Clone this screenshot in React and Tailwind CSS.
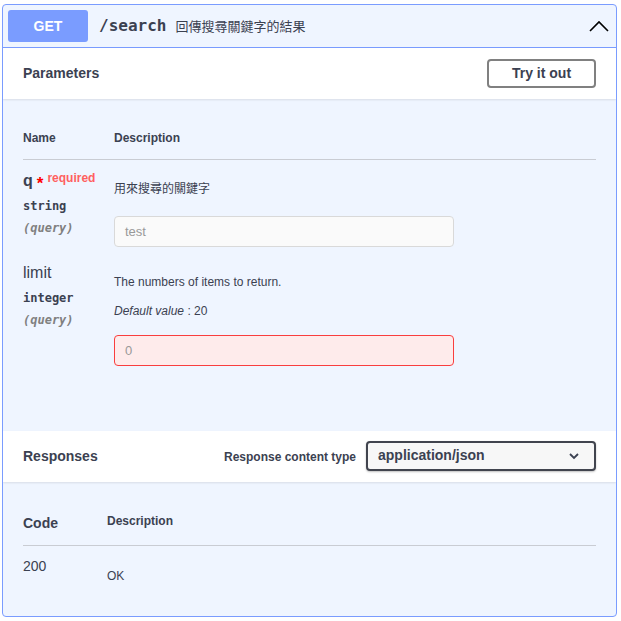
import React from 'react'

const sans = "font-['Liberation_Sans',Arial,sans-serif]"
const mono = "font-['DejaVu_Sans_Mono',monospace]"
const cjk = "font-['Noto_Sans_CJK_TC',sans-serif]"

function ChevronUp() {
  return (
    <svg width="22" height="14" viewBox="0 0 22 14" fill="none">
      <polyline points="2,12 11,3 20,12" stroke="#000" strokeWidth="1.6" />
    </svg>
  )
}

function ChevronDown() {
  return (
    <svg width="12" height="8" viewBox="0 0 12 8" fill="none">
      <polyline points="2,2 6,6 10,2" stroke="#3b4151" strokeWidth="1.8" />
    </svg>
  )
}

export default function App() {
  return (
    <div className={`w-[621px] h-[621px] bg-white pt-[4px] px-[2px] ${sans} text-[#3b4151]`}>
      <div className="w-[615px] h-[613px] border border-[#7a9cff] rounded-[4px] bg-[#eff5ff] overflow-hidden flex flex-col">
        {/* summary */}
        <div className="h-[43px] flex items-center border-b border-[#7a9cff] pl-[5px] pr-[4px]">
          <div className="w-[80px] h-[32px] rounded-[3px] bg-[#7a9cff] text-white text-[14px] font-bold flex items-center justify-center">
            GET
          </div>
          <span className={`ml-[11px] text-[16px] font-bold ${mono}`}>/search</span>
          <span className={`ml-[9px] text-[13px] ${cjk}`}>回傳搜尋關鍵字的結果</span>
          <div className="ml-auto mr-[2px]">
            <ChevronUp />
          </div>
        </div>

        {/* parameters header */}
        <div className="h-[51px] bg-white shadow-[0_1px_2px_rgba(0,0,0,0.1)] flex items-center pl-[20px] pr-[20px]">
          <h4 className="text-[14px] font-bold">Parameters</h4>
          <button className="ml-auto w-[109px] h-[29px] border-2 border-[#808080] rounded-[4px] text-[14px] font-bold">
            Try it out
          </button>
        </div>

        {/* parameters table */}
        <div className="pl-[20px] pr-[20px] pt-[30px] h-[332px]">
          <div className="flex text-[12px] font-bold h-[31px] border-b border-[#c9ccd3]">
            <div className="w-[91px]">Name</div>
            <div>Description</div>
          </div>

          <div className="flex items-start">
            <div className="w-[91px] pt-[11px]">
              <div className="h-[20px] flex items-start">
                <span className="text-[16px] font-bold leading-[20px]">q</span>
                <span className="text-[#ff0000] text-[17px] font-bold ml-[4px] leading-[20px] mt-[3px]">*</span>
                <span className="text-[#ff6060] text-[12px] font-bold ml-[4px] leading-[12px] mt-[1px]">required</span>
              </div>
              <div className={`mt-[7px] text-[12px] font-bold leading-[16px] ${mono}`}>string</div>
              <div className={`mt-[6px] text-[12px] italic font-semibold text-[#808080] leading-[16px] ${mono}`}>(query)</div>
            </div>
            <div className="pt-[19px]">
              <div className={`text-[12px] leading-[18px] ${cjk}`}>用來搜尋的關鍵字</div>
              <div className="mt-[19px] w-[340px] h-[31px] bg-[#fafafa] border border-[#d9d9d9] rounded-[4px] flex items-center px-[10px] text-[13px] text-[#999]">
                test
              </div>
            </div>
          </div>

          <div className="flex items-start">
            <div className="w-[91px] pt-[16px]">
              <div className="text-[16px] leading-[20px]">limit</div>
              <div className={`mt-[7px] text-[12px] font-bold leading-[16px] ${mono}`}>integer</div>
              <div className={`mt-[6px] text-[12px] italic font-semibold text-[#808080] leading-[16px] ${mono}`}>(query)</div>
            </div>
            <div className="pt-[27px]">
              <div className="text-[12px] leading-[16px]">The numbers of items to return.</div>
              <div className="mt-[13px] text-[12px] leading-[16px]">
                <i>Default value</i> : 20
              </div>
              <div className="mt-[16px] w-[340px] h-[31px] bg-[#feebeb] border border-[#f93e3e] rounded-[4px] flex items-center px-[10px] text-[13px] text-[#999]">
                0
              </div>
            </div>
          </div>
        </div>

        {/* responses header */}
        <div className="h-[51px] bg-white shadow-[0_1px_2px_rgba(0,0,0,0.1)] flex items-center pl-[20px] pr-[20px]">
          <h4 className="text-[14px] font-bold">Responses</h4>
          <label className="ml-auto text-[12px] font-bold">Response content type</label>
          <div className="ml-[10px] mb-[2px] w-[230px] h-[30px] border-2 border-[#41444e] rounded-[4px] bg-[#f7f7f7] flex items-center pl-[10px] pr-[14px] shadow-[0_1px_2px_rgba(0,0,0,0.25)]">
            <span className="text-[14px] font-bold">application/json</span>
            <span className="ml-auto"><ChevronDown /></span>
          </div>
        </div>

        {/* responses table */}
        <div className="pl-[20px] pr-[20px] pt-[31px]">
          <div className="flex items-start h-[33px] border-b border-[#c9ccd3]">
            <div className="w-[84px] mt-[1px] text-[14px] font-bold leading-[18px]">Code</div>
            <div className="text-[12px] font-bold leading-[16px]">Description</div>
          </div>
          <div className="flex items-start">
            <div className="w-[84px] pt-[12px] text-[14px] leading-[16px]">200</div>
            <div className="pt-[22px] text-[12px] leading-[16px]">OK</div>
          </div>
        </div>
      </div>
    </div>
  )
}
